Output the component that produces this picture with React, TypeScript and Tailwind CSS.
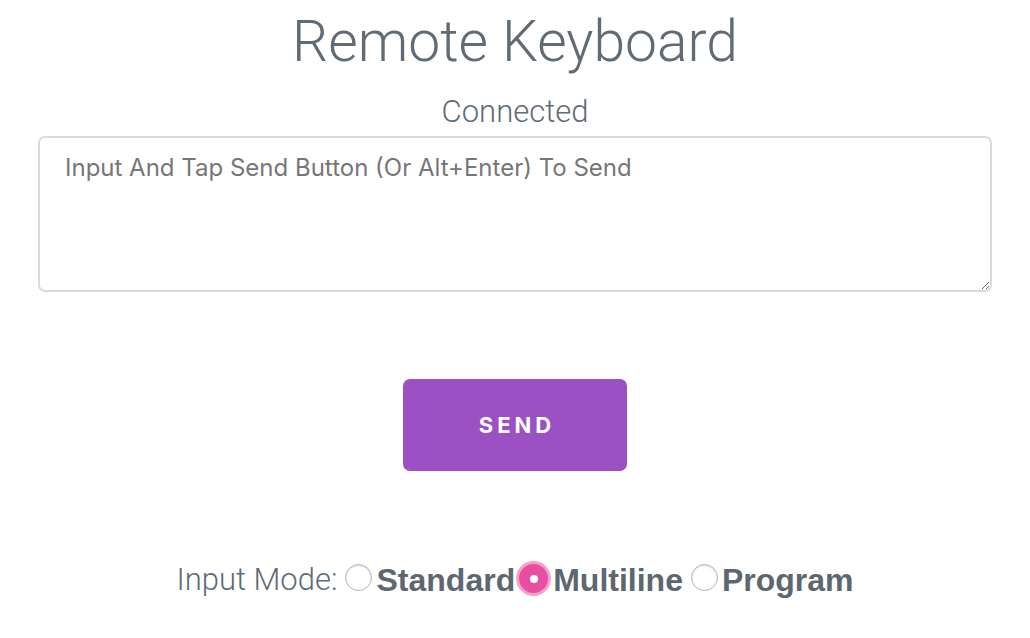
import React from "react";

function Radio({ checked, label }: { checked?: boolean; label: string }) {
  return (
    <label className="flex items-end">
      {checked ? (
        <span className="mb-[5px] ml-[1px] mr-[2px] flex h-[35px] w-[35px] items-center justify-center rounded-full bg-[#f3a3cb]">
          <span className="flex h-[29px] w-[29px] items-center justify-center rounded-full bg-[#e74fa2]">
            <span className="h-[8px] w-[8px] rounded-full bg-white" />
          </span>
        </span>
      ) : (
        <span className="mb-[10px] ml-[8px] mr-[4px] h-[27px] w-[27px] rounded-full border border-[#b5b5b5] bg-white shadow-[inset_0_1px_2px_rgba(0,0,0,0.15)]" />
      )}
      <span
        className="text-[32px] font-bold leading-[42px] text-[#5c6770]"
        style={{ fontFamily: "'Liberation Sans', Arial, sans-serif" }}
      >
        {label}
      </span>
    </label>
  );
}

export default function App() {
  return (
    <div
      className="flex min-h-[638px] w-full flex-col items-center bg-white"
      style={{ fontFamily: "Roboto, 'Liberation Sans', sans-serif" }}
    >
      <h1 className="mt-[13px] text-[57px] font-light leading-[58px] text-[#5f6b75]">
        Remote Keyboard
      </h1>
      <div className="mt-[23px] text-[31px] font-light leading-[36px] text-[#5f6b75]">Connected</div>
      <div className="mt-[6px] w-full px-[38px]">
        <textarea
          className="block h-[156px] w-full resize rounded-[7px] border-2 border-[#dadada] px-[25px] py-[14px] text-[24px] leading-[32px] text-[#333] outline-none placeholder:text-[#767676]"
          style={{ fontFamily: "Inter, 'Liberation Sans', sans-serif" }}
          placeholder="Input And Tap Send Button (Or Alt+Enter) To Send"
        />
      </div>
      <button
        className="mt-[87px] flex h-[92px] w-[224px] items-center justify-center rounded-[7px] bg-[#9b51c4] pl-[4px] text-[22px] font-bold tracking-[4px] text-white"
        style={{ fontFamily: "Inter, 'Liberation Sans', sans-serif" }}
      >
        SEND
      </button>
      <div className="mt-[88px] flex items-end">
        <span className="text-[31px] font-light leading-[42px] text-[#5f6b75]">Input Mode:</span>
        <Radio label="Standard" />
        <Radio label="Multiline" checked />
        <Radio label="Program" />
      </div>
    </div>
  );
}
